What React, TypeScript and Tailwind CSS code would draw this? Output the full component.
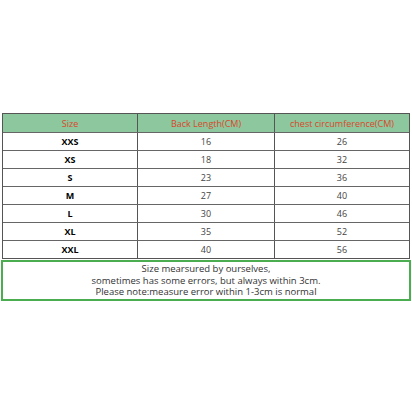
const rows = [
  ["XXS", "16", "26"],
  ["XS", "18", "32"],
  ["S", "23", "36"],
  ["M", "27", "40"],
  ["L", "30", "46"],
  ["XL", "35", "52"],
  ["XXL", "40", "56"],
];

export default function App() {
  return (
    <div className="w-[412px] h-[412px] bg-white pt-[113px] px-[2px] font-['Open_Sans','Liberation_Sans',sans-serif]">
      <div className="border border-[#555] w-[408px]">
        <div className="grid grid-cols-[135px_137px_1fr] h-[18px] bg-[#8cc79d] text-[#d9482c] text-[9px] leading-none">
          <div className="flex items-center justify-center border-r border-[#555]">Size</div>
          <div className="flex items-center justify-center border-r border-[#555]">Back Length(CM)</div>
          <div className="flex items-center justify-center">chest circumference(CM)</div>
        </div>
        {rows.map(([size, back, chest]) => (
          <div
            key={size}
            className="grid grid-cols-[135px_137px_1fr] h-[18px] border-t border-[#666] text-[9px] leading-none"
          >
            <div className="flex items-center justify-center border-r border-[#555] font-bold text-black">{size}</div>
            <div className="flex items-center justify-center border-r border-[#555] text-[#444]">{back}</div>
            <div className="flex items-center justify-center text-[#444]">{chest}</div>
          </div>
        ))}
      </div>
      <div className="mt-[1px] -mx-[1px] w-[410px] h-[41px] border-2 border-[#4aad4f] flex flex-col items-center justify-center text-[9.5px] leading-[11.5px] text-[#333]">
        <div>Size mearsured by ourselves,</div>
        <div>sometimes has some errors, but always within 3cm.</div>
        <div>Please note:measure error within 1-3cm is normal</div>
      </div>
    </div>
  );
}
